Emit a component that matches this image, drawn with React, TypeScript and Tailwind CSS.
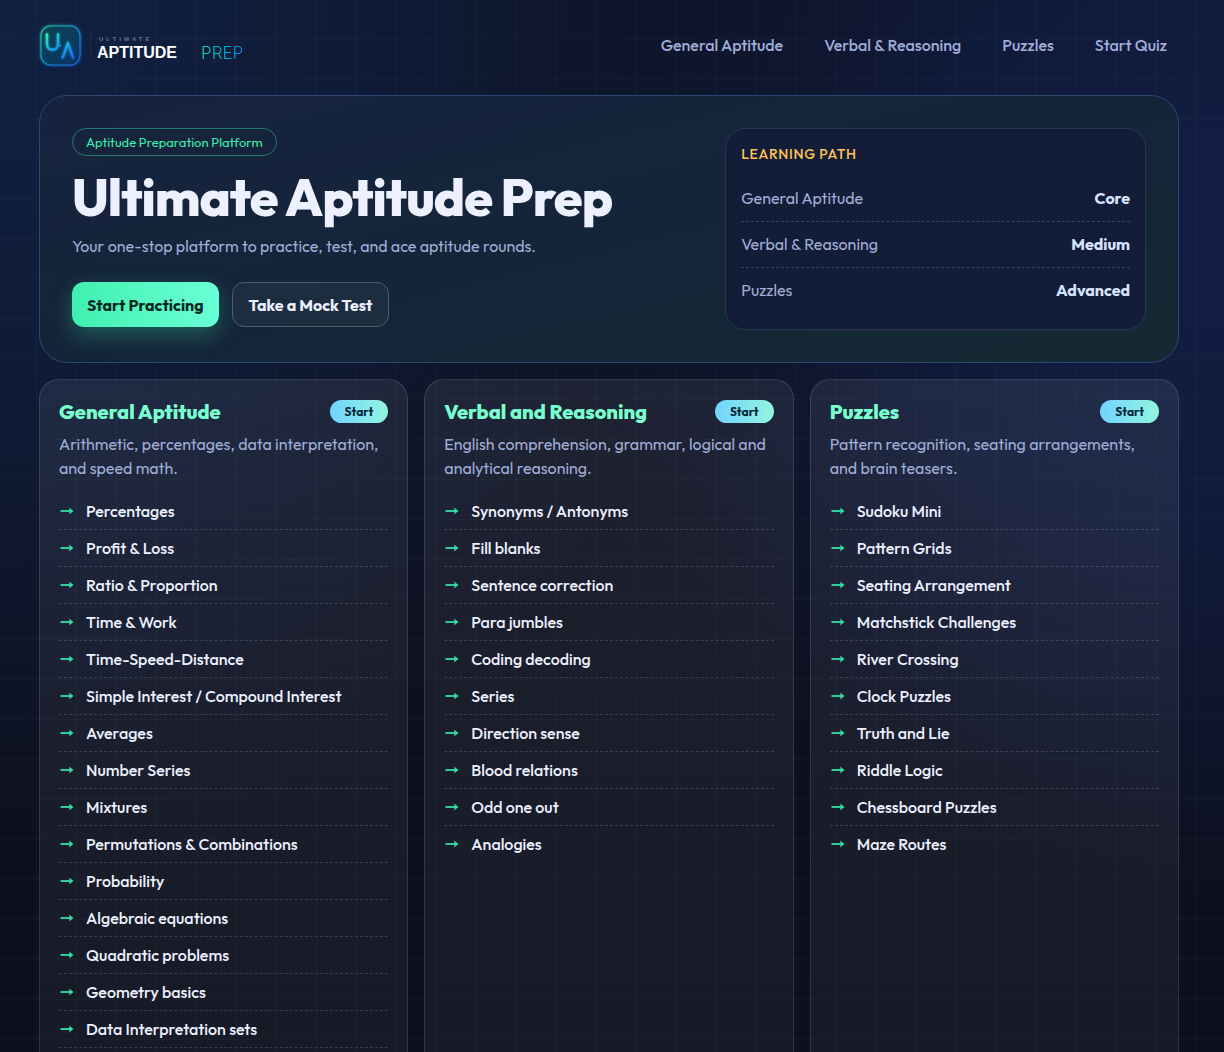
const NAV_LINKS = ["General Aptitude", "Verbal & Reasoning", "Puzzles", "Start Quiz"];

const LEARNING_PATH = [
  { topic: "General Aptitude", level: "Core" },
  { topic: "Verbal & Reasoning", level: "Medium" },
  { topic: "Puzzles", level: "Advanced" },
];

interface Category {
  title: string;
  description: string;
  topics: string[];
  closingDivider?: boolean;
}

const CATEGORIES: Category[] = [
  {
    title: "General Aptitude",
    description: "Arithmetic, percentages, data interpretation, and speed math.",
    topics: [
      "Percentages",
      "Profit & Loss",
      "Ratio & Proportion",
      "Time & Work",
      "Time-Speed-Distance",
      "Simple Interest / Compound Interest",
      "Averages",
      "Number Series",
      "Mixtures",
      "Permutations & Combinations",
      "Probability",
      "Algebraic equations",
      "Quadratic problems",
      "Geometry basics",
      "Data Interpretation sets",
    ],
    closingDivider: true,
  },
  {
    title: "Verbal and Reasoning",
    description: "English comprehension, grammar, logical and analytical reasoning.",
    topics: [
      "Synonyms / Antonyms",
      "Fill blanks",
      "Sentence correction",
      "Para jumbles",
      "Coding decoding",
      "Series",
      "Direction sense",
      "Blood relations",
      "Odd one out",
      "Analogies",
    ],
  },
  {
    title: "Puzzles",
    description: "Pattern recognition, seating arrangements, and brain teasers.",
    topics: [
      "Sudoku Mini",
      "Pattern Grids",
      "Seating Arrangement",
      "Matchstick Challenges",
      "River Crossing",
      "Clock Puzzles",
      "Truth and Lie",
      "Riddle Logic",
      "Chessboard Puzzles",
      "Maze Routes",
    ],
  },
];

function Logo() {
  return (
    <a href="#" className="mt-[3px] flex items-center" aria-label="Ultimate Aptitude Prep">
      <svg width="43" height="46" viewBox="2 0 43 46" fill="none" className="overflow-visible">
        <defs>
          <linearGradient id="stroke" x1="4" y1="4" x2="42" y2="42" gradientUnits="userSpaceOnUse">
            <stop stopColor="#22c99a" />
            <stop offset="0.5" stopColor="#128fc8" />
            <stop offset="1" stopColor="#1763e8" />
          </linearGradient>
          <linearGradient id="uStroke" x1="9" y1="11" x2="22" y2="27" gradientUnits="userSpaceOnUse">
            <stop stopColor="#2cf0b0" />
            <stop offset="1" stopColor="#1585f5" />
          </linearGradient>
          <linearGradient id="aStroke" x1="25" y1="18" x2="35" y2="35" gradientUnits="userSpaceOnUse">
            <stop stopColor="#17c8d8" />
            <stop offset="1" stopColor="#1a6cff" />
          </linearGradient>
          <filter id="glow" x="-20%" y="-20%" width="140%" height="140%">
            <feGaussianBlur stdDeviation="1.2" />
          </filter>
        </defs>
        <rect x="4" y="3" width="39" height="39" rx="10" stroke="url(#stroke)" strokeWidth="2.500" opacity="0.6" filter="url(#glow)" />
        <rect x="4" y="3" width="39" height="39" rx="10" fill="#0a2b48" />
        <rect x="4" y="3" width="39" height="39" rx="10" fill="url(#stroke)" fillOpacity="0.16" stroke="url(#stroke)" strokeWidth="1.200" />
        <g strokeLinecap="round" strokeLinejoin="round">
          <path d="M10 11.500V21c0 3.500 2.300 5.800 5.500 5.800S21 24.500 21 21V11.500" stroke="url(#uStroke)" strokeWidth="3" opacity="0.7" filter="url(#glow)" />
          <path d="M10 11.500V21c0 3.500 2.300 5.800 5.500 5.800S21 24.500 21 21V11.500" stroke="url(#uStroke)" strokeWidth="2.400" />
          <path d="M21 21.500c.6 1 1.600 1.200 2.600 1" stroke="url(#uStroke)" strokeWidth="1.600" />
          <path d="M25.500 34.500c2.200-3.500 3.300-9.500 5.300-14.500 1.700 4.500 3.200 9.500 5.200 14.500" stroke="url(#aStroke)" strokeWidth="3" opacity="0.7" filter="url(#glow)" />
          <path d="M25.500 34.500c2.200-3.500 3.300-9.500 5.300-14.500 1.700 4.500 3.200 9.500 5.200 14.500" stroke="url(#aStroke)" strokeWidth="2.200" />
        </g>
      </svg>
      <span className="ml-2 h-7 w-px bg-white/5" />
      <span className="ml-1.5 flex flex-col pt-1.5 font-['Liberation_Sans',Arial,sans-serif]">
        <span className="pl-0.5 text-[6px] leading-2 font-bold tracking-[3px] text-[#66728c]">ULTIMATE</span>
        <span className="flex items-center gap-6 text-base leading-5">
          <span className="font-bold text-white">APTITUDE</span>
          <span className="bg-linear-to-r from-[#1fd8a0] to-[#1a86f0] bg-clip-text font-['Inter',sans-serif] text-[17px] font-light text-transparent">
            PREP
          </span>
        </span>
      </span>
    </a>
  );
}

function Header() {
  return (
    <header className="flex h-[95px] items-center justify-between pb-1.5">
      <Logo />
      <nav className="flex gap-[17px]">
        {NAV_LINKS.map((label) => (
          <a key={label} href="#" className="px-3 py-2 font-medium text-[#a0aed8] hover:text-white">
            {label}
          </a>
        ))}
      </nav>
    </header>
  );
}

function Hero() {
  return (
    <section className="grid grid-cols-[3fr_2fr] gap-[22px] rounded-[28px] border border-[#2d4672] bg-linear-to-br from-[#16233f] via-[#142539] to-[#152933] p-8">
      <div className="flex flex-col items-start">
        <span className="rounded-full border border-[#21796b] px-[13px] text-[13px] leading-[26px] text-[#3cf0ae]">
          Aptitude Preparation Platform
        </span>
        <h1 className="mt-[11px] text-[52px] leading-[60px] font-extrabold tracking-[-1px] text-[#edf1ff]">
          Ultimate Aptitude Prep
        </h1>
        <p className="mt-[7px] leading-6 text-[#a0aed8]">
          Your one-stop platform to practice, test, and ace aptitude rounds.
        </p>
        <div className="mt-6 flex gap-[13px]">
          <button className="h-[45px] rounded-xl bg-linear-to-r from-[#3ef0b0] to-[#6affd6] px-[15px] font-bold text-[#06281f] shadow-[0_8px_22px_rgba(61,240,176,0.28)]">
            Start Practicing
          </button>
          <button className="h-[45px] rounded-xl border border-[#4f5e6d] bg-white/4 px-4 font-bold text-[#edf1ff]">
            Take a Mock Test
          </button>
        </div>
      </div>

      <aside className="self-start rounded-[20px] border border-[#2c3450] bg-[#141d37] p-[15px] pb-4">
        <h2 className="text-sm leading-5 font-medium tracking-wider text-[#ffc35a]">LEARNING PATH</h2>
        <ul className="mt-3">
          {LEARNING_PATH.map(({ topic, level }) => (
            <li
              key={topic}
              className="flex items-center justify-between border-b border-dashed border-[#3a4359] py-[11px] leading-[23px] last:border-b-0"
            >
              <span className="text-[#a0aed8]">{topic}</span>
              <strong className="font-bold text-[#d8e4ff]">{level}</strong>
            </li>
          ))}
        </ul>
      </aside>
    </section>
  );
}

function Arrow() {
  return (
    <svg width="16" height="10" viewBox="1 0 16 10" className="shrink-0" aria-hidden="true">
      <path d="M2.500 5h10" stroke="#33e0a5" strokeWidth="1.800" />
      <path d="M11 1.500l4.500 3.500-4.500 3.500c.8-2 .8-5 0-7z" fill="#33e0a5" />
    </svg>
  );
}

function CategoryCard({ title, description, topics, closingDivider }: Category) {
  return (
    <article className="rounded-[20px] border border-white/12 bg-linear-to-b from-white/7 to-white/4 px-[19px] pt-[19px] pb-14">
      <div className="flex items-center justify-between">
        <h3 className="text-xl leading-[25px] font-extrabold text-[#7affcf]">{title}</h3>
        <button className="rounded-full bg-linear-to-r from-[#72d3ff] to-[#93f5dc] px-[15px] text-xs leading-[23px] font-bold text-[#06263a]">
          Start
        </button>
      </div>
      <p className="mt-2 leading-6 text-[#a0aed8]">{description}</p>
      <ul className="mt-[13px]">
        {topics.map((topic) => (
          <li
            key={topic}
            className={`border-b border-dashed border-white/15 ${closingDivider ? "" : "last:border-b-0"}`}
          >
            <a href="#" className="flex h-9 items-center gap-[11px] font-medium text-[#edf1ff]">
              <Arrow />
              {topic}
            </a>
          </li>
        ))}
      </ul>
    </article>
  );
}

export default function App() {
  return (
    <div className="min-h-screen bg-[#0d101e] bg-[radial-gradient(circle_at_0%_0%,#112142_0%,#0f1c39_20%,transparent_50%),radial-gradient(circle_at_100%_20%,#121e44_0%,#101a3a_20%,transparent_44%)] font-['Outfit',sans-serif] text-base">
      <div className="min-h-screen bg-[linear-gradient(to_right,rgba(255,255,255,0.025)_1px,transparent_1px),linear-gradient(to_bottom,rgba(255,255,255,0.025)_1px,transparent_1px)] bg-size-[40px_40px] bg-position-[36px_39px] pr-1.5">
        <div className="mx-auto max-w-[1140px] pb-10">
          <Header />
          <main className="flex flex-col gap-4">
            <Hero />
            <section className="grid grid-cols-3 gap-4">
              {CATEGORIES.map((category) => (
                <CategoryCard key={category.title} {...category} />
              ))}
            </section>
          </main>
        </div>
      </div>
    </div>
  );
}
